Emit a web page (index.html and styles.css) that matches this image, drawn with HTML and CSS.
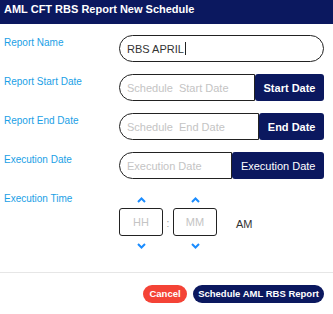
FILE: index.html
```html
<!DOCTYPE html>
<html lang="en">
  <head>
    <meta charset="UTF-8" />
    <meta name="viewport" content="width=device-width, initial-scale=1.0" />
    <link rel="stylesheet" href="styles.css">
  </head>
  <body>
    <div class="header">AML CFT RBS Report New Schedule</div>

    <div class="form">
      <div class="row">
        <div class="label">Report Name</div>
        <div class="field">
          <div class="input">RBS APRIL<span class="caret"></span></div>
        </div>
      </div>

      <div class="row">
        <div class="label">Report Start Date</div>
        <div class="field">
          <div class="input grouped placeholder">Schedule&nbsp; Start Date</div>
          <button class="addon bold">Start Date</button>
        </div>
      </div>

      <div class="row">
        <div class="label">Report End Date</div>
        <div class="field">
          <div class="input grouped placeholder">Schedule&nbsp; End Date</div>
          <button class="addon bold">End Date</button>
        </div>
      </div>

      <div class="row">
        <div class="label">Execution Date</div>
        <div class="field">
          <div class="input grouped placeholder">Execution Date</div>
          <button class="addon">Execution Date</button>
        </div>
      </div>

      <div class="row">
        <div class="label">Execution Time</div>
        <div class="time">
          <div class="spinner">
            <div class="chev up">
              <svg width="9" height="6" viewBox="0 0 9 6"><polyline points="1,5 4.5,1.5 8,5" /></svg>
            </div>
            <div class="box">HH</div>
            <div class="chev down">
              <svg width="9" height="6" viewBox="0 0 9 6"><polyline points="1,1 4.5,4.5 8,1" /></svg>
            </div>
          </div>
          <div class="colon">:</div>
          <div class="spinner">
            <div class="chev up">
              <svg width="9" height="6" viewBox="0 0 9 6"><polyline points="1,5 4.5,1.5 8,5" /></svg>
            </div>
            <div class="box">MM</div>
            <div class="chev down">
              <svg width="9" height="6" viewBox="0 0 9 6"><polyline points="1,1 4.5,4.5 8,1" /></svg>
            </div>
          </div>
          <div class="ampm">AM</div>
        </div>
      </div>
    </div>

    <div class="footer">
      <button class="btn cancel">Cancel</button>
      <button class="btn submit">Schedule AML RBS Report</button>
    </div>
  </body>
</html>
```

FILE: styles.css
```css
* {
  box-sizing: border-box;
}

body {
  margin: 0;
  font-family: Arial, "Liberation Sans", sans-serif;
  background-color: #fff;
}

.header {
  height: 24px;
  padding: 3px 4px 0;
  background-color: #0b185f;
  color: #fff;
  font-size: 11px;
  font-weight: bold;
  line-height: 13px;
}

.form {
  display: flex;
  flex-direction: column;
  gap: 12px;
  padding: 11px 9px 16px 0;
}

.row {
  display: flex;
}

.label {
  width: 119px;
  padding: 2px 0 0 4px;
  font-size: 10px;
  line-height: 12px;
  color: #1aa0e6;
}

.field {
  flex: 1;
  display: flex;
  height: 27px;
}

.input {
  flex: 1;
  display: flex;
  align-items: center;
  padding: 0 7px;
  border: 1px solid #222;
  border-radius: 14px;
  font-size: 11px;
  color: #333;
  white-space: nowrap;
}

.input.grouped {
  border-radius: 14px 0 0 14px;
}

.placeholder {
  color: #c4c4c4;
}

.caret {
  width: 1px;
  height: 13px;
  margin-left: 1px;
  background-color: #222;
}

.addon {
  display: flex;
  align-items: center;
  padding: 0 8.5px;
  border: none;
  border-radius: 3px;
  background-color: #0b185f;
  color: #fff;
  font-family: inherit;
  font-size: 11px;
  white-space: nowrap;
}

.addon.bold {
  font-weight: bold;
}

/* time picker */
.time {
  display: flex;
  align-items: center;
}

.spinner {
  display: flex;
  flex-direction: column;
  align-items: center;
  width: 44px;
}

.chev {
  display: flex;
  align-items: center;
  justify-content: center;
  height: 17px;
}

.chev.down {
  height: 20px;
}

.chev polyline {
  fill: none;
  stroke: #1a8cff;
  stroke-width: 2;
}

.box {
  display: flex;
  align-items: center;
  justify-content: center;
  width: 44px;
  height: 28px;
  border: 1px solid #222;
  border-radius: 3px;
  font-size: 11px;
  color: #c4c4c4;
}

.colon {
  width: 10px;
  text-align: center;
  font-size: 10px;
  color: #999;
}

.ampm {
  margin-left: 19px;
  font-size: 11px;
  color: #333;
}

.footer {
  display: flex;
  justify-content: flex-end;
  gap: 6px;
  padding: 12px 9px 0;
  border-top: 1px solid #e6e6e6;
}

.btn {
  height: 18px;
  padding: 0 5px;
  border: none;
  border-radius: 9px;
  color: #fff;
  font-family: inherit;
  font-size: 9.5px;
  font-weight: bold;
  line-height: 18px;
}

.btn.cancel {
  padding: 0 6.5px;
  background-color: #f44336;
}

.btn.submit {
  background-color: #0b185f;
}
```
